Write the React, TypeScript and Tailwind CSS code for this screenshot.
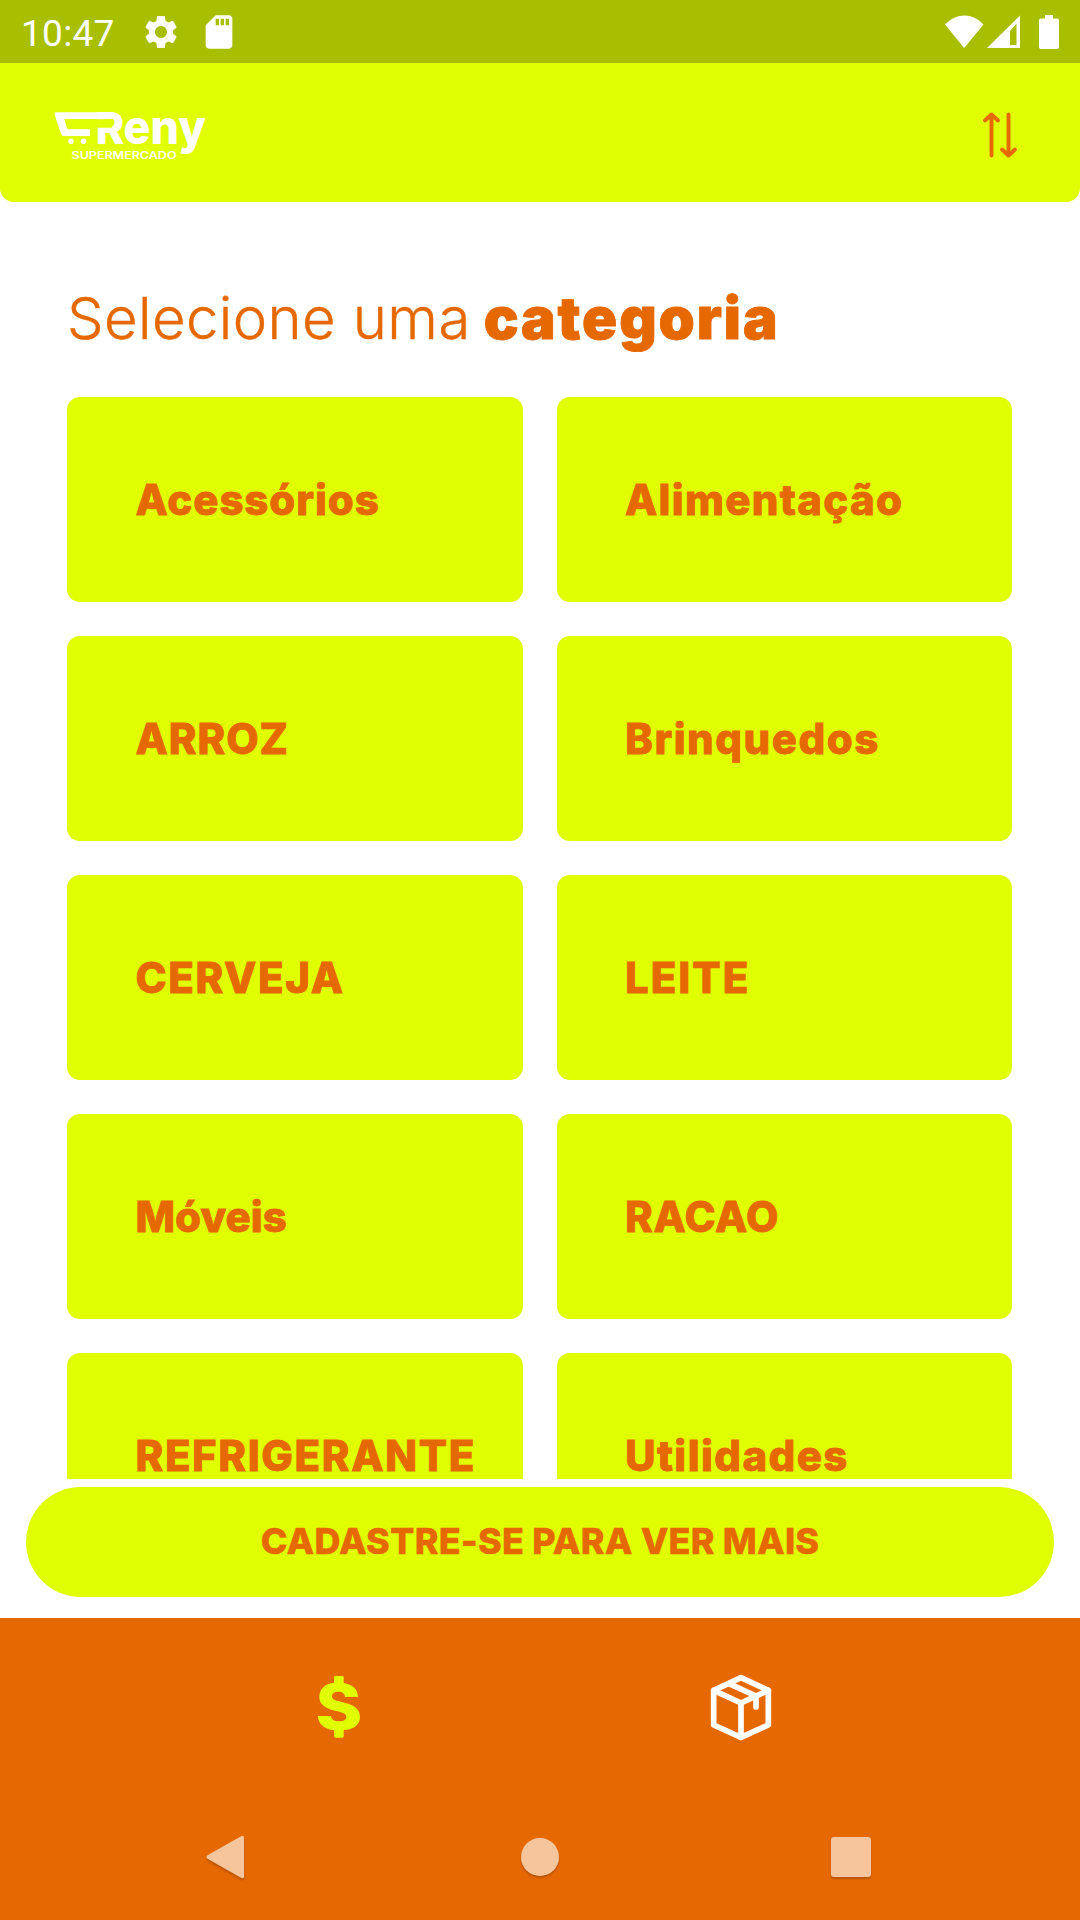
import React from 'react';
import { MdSdCard, MdSettings } from 'react-icons/md';

const categories = [
  { name: 'Acessórios', tracking: 'tracking-[0.9px]' },
  { name: 'Alimentação', tracking: 'tracking-[1.3px]' },
  { name: 'ARROZ', tracking: 'tracking-[0.9px]' },
  { name: 'Brinquedos', tracking: 'tracking-[1.5px]' },
  { name: 'CERVEJA', tracking: 'tracking-[1.6px]' },
  { name: 'LEITE', tracking: 'tracking-[2px]' },
  { name: 'Móveis', tracking: 'tracking-[0px]' },
  { name: 'RACAO', tracking: 'tracking-[0.6px]' },
  { name: 'REFRIGERANTE', tracking: 'tracking-[1.6px]' },
  { name: 'Utilidades', tracking: 'tracking-[1.4px]' },
];

function StatusBar() {
  return (
    <div className="flex h-[63px] shrink-0 items-center bg-[#a8bf00] pr-[21px] pl-[21px] text-white">
      <span className="mt-[3px] w-[120px] font-['Roboto',sans-serif] text-[37px] leading-none tracking-[0.3px]">10:47</span>
      <MdSettings size={40} />
      <MdSdCard size={40} className="ml-[18px]" />
      <div className="ml-auto flex items-center">
        <svg width="40" height="34" viewBox="0 0 40 34" fill="currentColor">
          <path d="M0 9.500C12-2.500 27-2.500 38.500 9.500L19.200 33z" />
        </svg>
        <svg width="33" height="34" viewBox="0 0 33 34" fill="currentColor" className="ml-[2px]">
          <path fillRule="evenodd" d="M0 33L33 0.500V33zM23 16V30H29.500V8.500z" />
        </svg>
        <svg width="20" height="34" viewBox="0 0 20 34" fill="currentColor" className="ml-[19px]">
          <path d="M6 0h8v3.500h4a2 2 0 0 1 2 2V32a2 2 0 0 1-2 2H2a2 2 0 0 1-2-2V5.500a2 2 0 0 1 2-2h4z" />
        </svg>
      </div>
    </div>
  );
}

function Logo() {
  return (
    <svg width="180" height="70" viewBox="0 0 180 70" fill="#fff">
      <path d="M16.200 12.300H72V19.300H24.500L27.500 29.300H50V36H23.500Q21.700 36 21.200 34.300L14.500 14.500Q14 12.300 16.200 12.300z" />
      <circle cx="31" cy="41.300" r="2.800" />
      <circle cx="43.500" cy="41.300" r="2.800" />
      <g fontFamily="Inter, sans-serif" fontWeight="800">
        <text x="55.500" y="44" fontSize="43.500" textLength="29" lengthAdjust="spacingAndGlyphs">R</text>
        <text x="83.500" y="44" fontSize="47" textLength="82.500" lengthAdjust="spacingAndGlyphs">eny</text>
        <text x="31.500" y="58.500" fontSize="10" fontWeight="600" textLength="105" lengthAdjust="spacingAndGlyphs">
          SUPERMERCADO
        </text>
      </g>
      <path d="M24.500 19.300H72V27.800H27z" fill="#e0ff00" />
    </svg>
  );
}

function SortIcon() {
  return (
    <svg
      width="36"
      height="48"
      viewBox="0 0 36 48"
      fill="none"
      stroke="#e66800"
      strokeWidth="3.900"
      strokeLinecap="round"
      strokeLinejoin="round"
    >
      <path d="M9.500 44.500V3.500M3 9.500L9.500 3.500L16 9.500" />
      <path d="M26.500 3.500V44.500M20 38.500L26.500 44.500L33 38.500" />
    </svg>
  );
}

function Header() {
  return (
    <header className="flex h-[139px] shrink-0 items-center justify-between rounded-b-[14px] bg-[#e0ff00] pt-[5px] pr-[62px] pl-10">
      <Logo />
      <SortIcon />
    </header>
  );
}

function DollarIcon() {
  return (
    <svg width="120" height="120" viewBox="0 0 360 360" fill="#e0ff00">
      <path d="M162 112q0-4 4-4h21q4 0 4 4V129C218 133 234 148 234 171H195C195 161 187 155 176 155C163 155 156 161 156 169C156 178 164 181 185 186C218 193 240 205 240 231C240 254 221 268 191 271V289q0 4-4 4h-21q-4 0-4-4V271C132 267 114 251 114 228H153C154 239 163 244 177 244C191 244 199 239 199 231C199 222 191 219 172 214C138 206 118 195 118 170C118 147 135 131 162 128z" />
    </svg>
  );
}

function BoxIcon() {
  return (
    <svg
      width="120"
      height="120"
      viewBox="0 0 360 360"
      fill="none"
      stroke="#fff"
      strokeWidth="17"
      strokeLinecap="round"
      strokeLinejoin="round"
    >
      <path d="M183 113L265 151V255L183 292L101 255V151z" />
      <path d="M101 151L183 189L265 151M183 189V292" />
      <path d="M147 131L228 168V201" />
    </svg>
  );
}

function SystemNav() {
  return (
    <div className="mx-auto grid h-[126px] w-[945px] grid-cols-3 place-items-center text-[#f6c59b]">
      <svg width="60" height="60" viewBox="0 0 60 60" fill="currentColor" className="drop-shadow-[0_2px_1px_rgba(0,0,0,0.2)]">
        <path d="M12.500 28.200L46 9.200Q49 7.700 49 10.500V49.500Q49 52.300 46 50.800L12.500 31.800Q10.500 30 12.500 28.200z" />
      </svg>
      <div className="size-[38px] rounded-full bg-current shadow-[0_2px_2px_rgba(0,0,0,0.2)]" />
      <div className="mr-[9px] size-10 rounded-[3px] bg-current shadow-[0_2px_2px_rgba(0,0,0,0.2)]" />
    </div>
  );
}

export default function App() {
  return (
    <div className="flex h-[1920px] w-[1080px] flex-col overflow-hidden bg-white font-['Inter',sans-serif] text-[#e66800]">
      <StatusBar />
      <Header />
      <main className="h-[1277px] shrink-0 overflow-hidden pt-20 pr-[68px] pl-[67px]">
        <h1 className="text-[58px] leading-[72px] font-light tracking-[0.4px] whitespace-nowrap [-webkit-text-stroke:0.4px_#e66800]">
          Selecione uma
          <span className="ml-[13px] font-black tracking-[1.9px] [-webkit-text-stroke:0.8px_#e66800]">categoria</span>
        </h1>
        <div className="mt-[43px] grid grid-cols-2 gap-[34px]">
          {categories.map(({ name, tracking }) => (
            <div key={name} className="flex h-[205px] items-center rounded-[13px] bg-[#e0ff00] pt-px pl-[68.5px]">
              <span
                className={`text-[42px] leading-none font-extrabold [-webkit-text-stroke:0.8px_#e66800] ${tracking}`}
              >
                {name}
              </span>
            </div>
          ))}
        </div>
      </main>
      <div className="flex h-[139px] shrink-0 items-start px-[26px] pt-2">
        <button className="h-[110px] w-full rounded-full bg-[#e0ff00] pb-[2px] text-[36px] leading-none font-extrabold tracking-[0.2px] [-webkit-text-stroke:0.4px_#e66800]">
          CADASTRE-SE PARA VER MAIS
        </button>
      </div>
      <footer className="flex-1 bg-[#e66800]">
        <nav className="mx-auto flex h-[176px] w-[804px] items-center">
          <div className="flex flex-1 justify-center pb-[12px] pl-[2px]">
            <DollarIcon />
          </div>
          <div className="flex flex-1 justify-center pr-[2px] pb-[12px]">
            <BoxIcon />
          </div>
        </nav>
        <SystemNav />
      </footer>
    </div>
  );
}
